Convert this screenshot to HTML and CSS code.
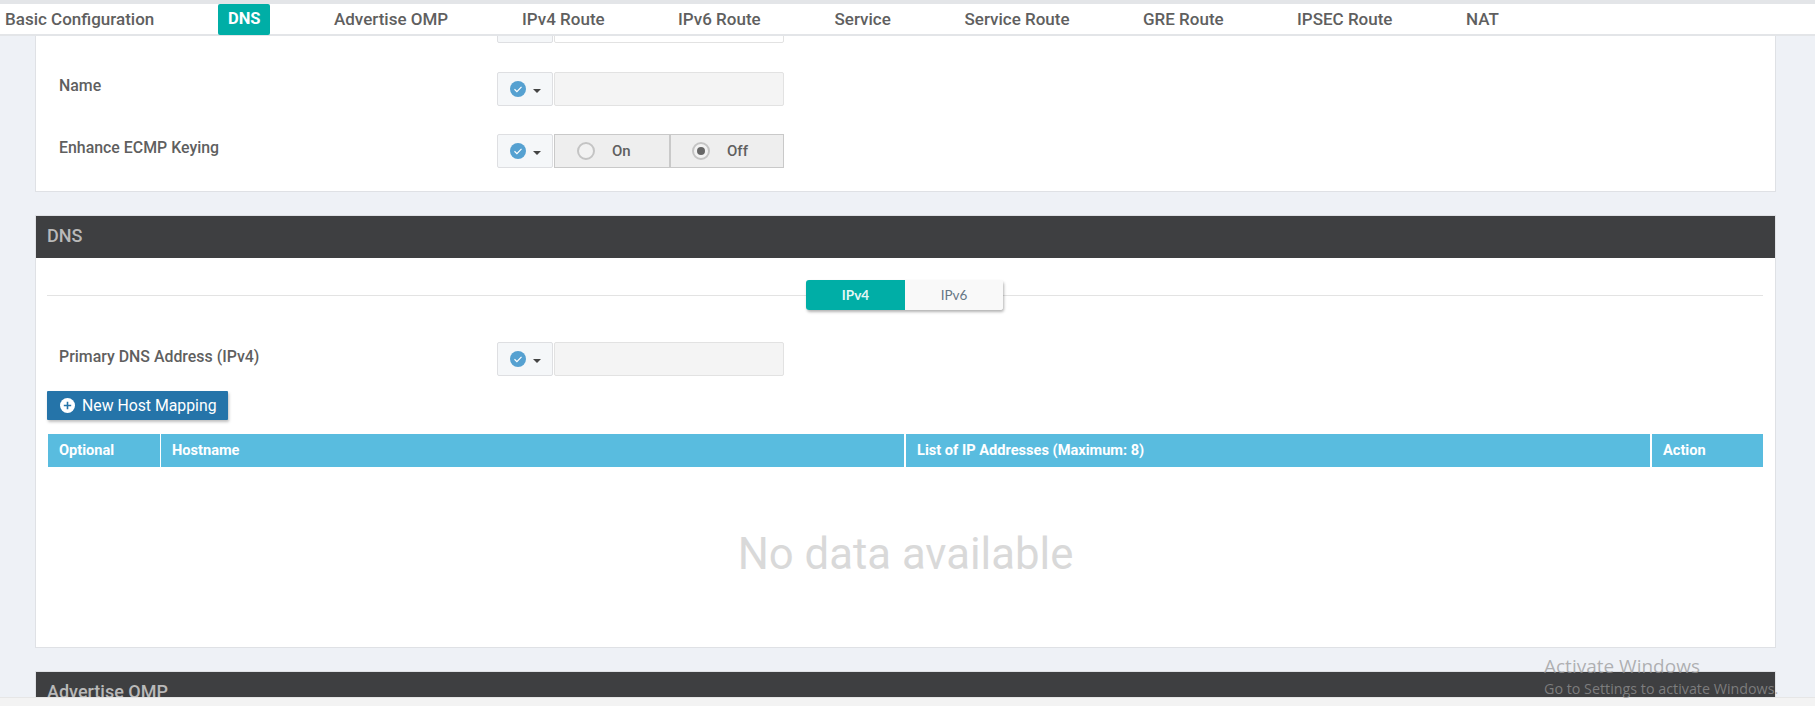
FILE: index.html
```html
<!DOCTYPE html>
<html lang="en">
<head>
<meta charset="utf-8">
<title>Template</title>
<link rel="stylesheet" href="styles.css">
</head>
<body>
<div class="topline"></div>
<nav class="tabs">
  <a class="tab t1">Basic Configuration</a>
  <a class="tab t2 active">DNS</a>
  <a class="tab t3">Advertise OMP</a>
  <a class="tab t4">IPv4 Route</a>
  <a class="tab t5">IPv6 Route</a>
  <a class="tab t6">Service</a>
  <a class="tab t7">Service Route</a>
  <a class="tab t8">GRE Route</a>
  <a class="tab t9">IPSEC Route</a>
  <a class="tab t10">NAT</a>
</nav>
<main class="content">
  <section class="card card-top">
    <div class="row row-cut">
      <div class="label"></div>
      <div class="scope">
        <span class="scope-box"></span><span class="field"></span>
      </div>
    </div>
    <div class="row row-name">
      <div class="label">Name</div>
      <div class="scope">
        <span class="scope-box"><svg class="check" viewBox="0 0 16 16"><circle cx="8" cy="8" r="8" fill="#56a1d1"/><path d="M4.5 8.3l2.4 2.3 4.6-4.8" fill="none" stroke="#fff" stroke-width="1.2"/></svg><i class="caret"></i></span><span class="field"></span>
      </div>
    </div>
    <div class="row row-ecmp">
      <div class="label">Enhance ECMP Keying</div>
      <div class="scope">
        <span class="scope-box"><svg class="check" viewBox="0 0 16 16"><circle cx="8" cy="8" r="8" fill="#56a1d1"/><path d="M4.5 8.3l2.4 2.3 4.6-4.8" fill="none" stroke="#fff" stroke-width="1.2"/></svg><i class="caret"></i></span><div class="radios">
          <span class="radio"><i class="dot"></i>On</span>
          <span class="radio"><i class="dot on"></i>Off</span>
        </div>
      </div>
    </div>
  </section>

  <section class="card card-dns">
    <h2 class="card-head">DNS</h2>
    <div class="card-body">
      <div class="divider">
        <div class="seg"><span class="seg-item seg-on">IPv4</span><span class="seg-item">IPv6</span></div>
      </div>
      <div class="row row-primary">
        <div class="label">Primary DNS Address (IPv4)</div>
        <div class="scope">
          <span class="scope-box"><svg class="check" viewBox="0 0 16 16"><circle cx="8" cy="8" r="8" fill="#56a1d1"/><path d="M4.5 8.3l2.4 2.3 4.6-4.8" fill="none" stroke="#fff" stroke-width="1.2"/></svg><i class="caret"></i></span><span class="field"></span>
        </div>
      </div>
      <button class="btn-new" type="button"><svg class="plus" viewBox="0 0 15 15"><circle cx="7.5" cy="7.5" r="7.5" fill="#fff"/><path d="M7.5 3.8v7.4M3.8 7.5h7.4" stroke="#2574a9" stroke-width="1.6"/></svg>New Host Mapping</button>
      <div class="thead">
        <div class="th th1">Optional</div>
        <div class="th th2">Hostname</div>
        <div class="th th3">List of IP Addresses (Maximum: 8)</div>
        <div class="th th4">Action</div>
      </div>
      <div class="empty">No data available</div>
    </div>
  </section>

  <section class="card card-omp">
    <h2 class="card-head">Advertise OMP</h2>
  </section>
</main>
<footer class="bottom"></footer>
<div class="activate">
  <div class="a1">Activate Windows</div>
  <div class="a2">Go to Settings to activate Windows.</div>
</div>
</body>
</html>
```
FILE: styles.css
```css
* { box-sizing: border-box; }
html, body { margin: 0; height: 706px; overflow: hidden; }
body {
  background: #eef1f6;
  font-family: Roboto, "Liberation Sans", sans-serif;
  color: #5f5f5f;
  position: relative;
}
.topline { height: 4px; background: #e3e5e8; }
.tabs {
  display: flex;
  height: 32px;
  background: #fff;
  border-bottom: 2px solid #e3e5e8;
  font-size: 17px;
  font-weight: 500;
  color: #5f5f5f;
  position: relative;
  z-index: 2;
}
.tab { display: block; flex: none; line-height: 30px; white-space: nowrap; height: 31px; }
.t1 { margin-left: 3px; width: 215px; padding-left: 2px; }
.active { width: 52px; padding-left: 10px; background: #00aea6; color: #fff; border-radius: 2px; font-weight: 700; font-size: 16.5px; }
.t3 { margin-left: 64px; width: 188px; }
.t4 { width: 156px; }
.t5 { width: 156.5px; }
.t6 { width: 130px; }
.t7 { width: 178.5px; }
.t8 { width: 154px; }
.t9 { width: 169px; }
.content { margin: 0 39px 0 35px; }
.card {
  background: #fff;
  border: 1px solid #dfe1e5;
  border-top: 0;
}
.card-top { height: 157px; margin-top: -1px; padding: 0 0 0 23px; overflow: hidden; }
.row { display: flex; align-items: flex-start; }
.label { width: 438px; font-size: 15.9px; font-weight: 500; color: #5f5f5f; line-height: 18px; }
.row-cut { height: 34px; margin-top: -26px; }
.row-name { margin-top: 29px; }
.row-name .label { padding-top: 5px; }
.row-ecmp { margin-top: 28px; }
.row-ecmp .label { padding-top: 5px; }
.scope { display: flex; gap: 1px; height: 34px; }
.scope-box {
  width: 56px; height: 34px;
  background: #f5f7f9;
  border: 1px solid #dedfe2;
  border-radius: 2px;
  display: flex; align-items: center; padding-left: 12px; gap: 7px;
}
.check { width: 16px; height: 16px; flex: none; margin-top: -1px; }
.caret { width: 0; height: 0; margin-top: 3px; border-left: 4px solid transparent; border-right: 4px solid transparent; border-top: 4px solid #444; }
.field {
  width: 230px; height: 34px;
  background: #f4f4f4;
  border: 1px solid #e2e2e2;
  border-radius: 2px;
}
.row-cut .field { background: #fff; }
.radios { display: flex; width: 230px; height: 34px; background: #eee; border: 1px solid #c9c9c9; font-size: 15px; font-weight: 500; color: #5f5f5f; }
.radio { display: flex; align-items: center; width: 114px; padding-left: 22px; gap: 17px; }
.radio + .radio { border-left: 2px solid #c9c9c9; padding-left: 21px; }
.dot { width: 18px; height: 18px; border-radius: 50%; border: 2px solid #c4c4c4; background: #f2f2f2; flex: none; position: relative; }
.dot.on::after { content: ""; width: 8px; height: 8px; background: #666; border-radius: 50%; position: absolute; left: 3px; top: 3px; }

.card-dns { margin-top: 23px; height: 433px; border-top: 1px solid #dfe1e5; }
.card-head {
  margin: 0;
  background: #3e3f41;
  color: #b9b9b9;
  font-size: 18px;
  font-weight: 500;
  height: 42px;
  line-height: 40px;
  padding-left: 11px;
}
.card-body { padding: 0 12px 0 11px; }
.divider {
  height: 1px;
  background: #e3e3e3;
  margin-top: 37px;
  position: relative;
}
.seg {
  position: absolute;
  left: 759px;
  top: -15px;
  width: 197px;
  height: 30px;
  display: flex;
  box-shadow: 1px 2px 3px rgba(0,0,0,.3);
  border-radius: 3px;
  font-family: Lato, sans-serif;
  font-size: 13.5px;
}
.seg-item { flex: none; width: 98px; background: #f9f9f9; text-align: center; line-height: 30px; color: #667785; border-radius: 0 3px 3px 0; }
.seg-on { width: 99px; background: #00aea6; color: #e4f7f6; font-weight: 700; border-radius: 3px 0 0 3px; }
.row-primary { margin-top: 46px; padding-left: 12px; }
.row-primary .label { padding-top: 6px; }
.btn-new {
  display: flex; align-items: center;
  width: 181px; height: 29px;
  margin-top: 15px;
  padding: 0 0 0 13px;
  border: 0;
  background: #2574a9;
  color: #fff;
  font: 400 15.8px Roboto, "Liberation Sans", sans-serif;
  box-shadow: 1px 2px 3px rgba(0,0,0,.25);
  border-radius: 1px;
  gap: 7px;
}
.plus { width: 15px; height: 15px; flex: none; margin-top: -1px; }
.thead {
  display: flex;
  margin-top: 14px;
  height: 33px;
  margin-left: 1px;
  background: #59bcdf;
  color: #fff;
  font-size: 14.6px;
  font-weight: 700;
  line-height: 33px;
}
.th { flex: none; padding-left: 11px; border-right: 2px solid #fff; white-space: nowrap; }
.th1 { width: 113px; border-right-width: 1px; }
.th2 { width: 745px; }
.th3 { width: 746px; }
.th4 { width: 110px; border-right: 0; }
.empty {
  text-align: center;
  font-size: 43.7px;
  font-weight: 400;
  color: #d9d9d9;
  margin-top: 62px;
  line-height: 50px;
  margin-left: 1px;
}
.card-omp { margin-top: 23px; height: 60px; border-top: 1px solid #dfe1e5; }
.bottom { position: absolute; left: 0; right: 0; bottom: 0; height: 9px; background: #f3f3f3; border-top: 1px solid #e6e6e6; }
.activate { position: absolute; left: 1544px; top: 654px; font-family: "Open Sans", sans-serif; color: rgba(150,150,150,.72); white-space: nowrap; }
.a1 { font-size: 19px; line-height: 25px; }
.a2 { font-size: 14.3px; line-height: 20px; }
```
